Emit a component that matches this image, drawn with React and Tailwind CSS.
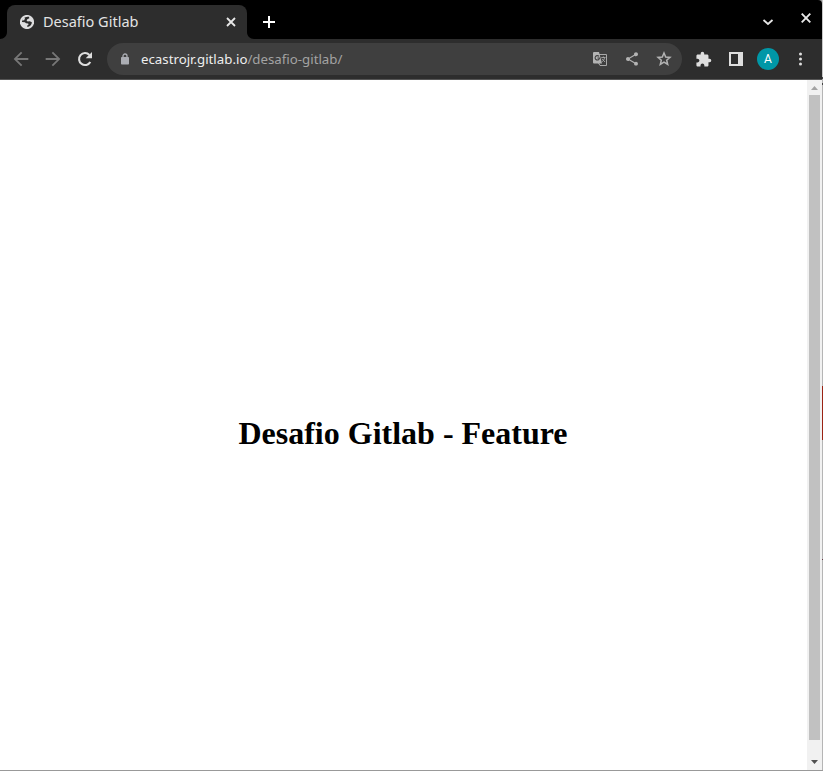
import React from "react";
import {
  MdArrowBack,
  MdArrowForward,
  MdShare,
  MdExtension,
} from "react-icons/md";

function Globe() {
  return (
    <svg className="h-[14px] w-[14px] shrink-0" viewBox="0 0 14 14">
      <circle cx="7" cy="7" r="7.100" fill="#dededf" />
      <path
        fill="#2d2d2d"
        d="M7.500 1.800H9L9.300 3.300 7.300 4.200 6.600 5.400 7.600 6.400 9.600 6.300 11.900 7.300C11.800 9.800 9.900 11.700 7.300 12V10.500L8.600 9.500 8.200 8.400 6 8.200 4.900 7.200 2 6.900C2 4.300 4.500 2 7.500 1.800Z"
      />
      <path fill="#dededf" d="M2 5.500L4.200 5.300 5 3.300 3.500 2.500Z" />
    </svg>
  );
}

function Reload() {
  return (
    <svg className="h-[22px] w-[22px] shrink-0" viewBox="0 0 22 22">
      <path d="M16.300 14A6 6 0 1 1 15.400 6.900" fill="none" stroke="#dedede" strokeWidth="2.100" />
      <path d="M18 4v6.300h-6.300Z" fill="#dedede" />
    </svg>
  );
}

function Translate() {
  return (
    <svg className="h-[16px] w-[16px] shrink-0" viewBox="0 0 16 16" fill="none">
      <path d="M7 3.500h7.500v11H8L6.500 12" stroke="#a9a9a9" strokeWidth="1" />
      <path d="M1 2a1 1 0 0 1 1-1h5l3 11.500H2a1 1 0 0 1-1-1Z" fill="#b3b3b3" />
      <path d="M7 5.400A2.200 2.200 0 1 0 7.500 7H5.400" stroke="#3f3f3f" strokeWidth="1.100" />
      <path d="M9.300 6.500H13.500M11.400 5.500v1M12.700 6.500C12.300 8.500 11.500 9.500 10.300 10.700M10 7.800L13 11" stroke="#a9a9a9" strokeWidth="0.900" />
    </svg>
  );
}

function Star() {
  return (
    <svg className="h-[16px] w-[16px] shrink-0" viewBox="0 0 16 16" fill="none" stroke="#b3b3b3" strokeWidth="1.500">
      <path d="M8 2L9.700 6 14 6.400 10.700 9.200 11.700 13.500 8 11.200 4.300 13.500 5.300 9.200 2 6.400 6.300 6Z" />
    </svg>
  );
}

function Lock() {
  return (
    <svg className="h-[12px] w-[8px] shrink-0" viewBox="0 0 8 12">
      <path d="M2 5V3a2 2 0 0 1 4 0v2" fill="none" stroke="#abadb3" strokeWidth="1.300" />
      <rect y="4" width="8" height="7.500" rx="0.800" fill="#abadb3" />
    </svg>
  );
}

function TabStrip() {
  return (
    <div className="flex h-[39px] items-end bg-black">
      <svg className="h-[7px] w-[7px] shrink-0" viewBox="0 0 7 7" fill="#2d2d2d">
        <path d="M7 0v7H0C4 7 7 4 7 0Z" />
      </svg>
      <div className="flex h-[34px] w-[240px] shrink-0 items-center rounded-t-[8px] bg-[#2d2d2d] pl-[13px]">
        <Globe />
        <span className="mb-[2px] ml-[9px] w-[170px] text-[14.5px] leading-5 whitespace-nowrap text-[#e3e3e3]">
          Desafio Gitlab
        </span>
        <svg className="ml-[13px] h-[10px] w-[10px]" viewBox="0 0 10 10" stroke="#e8e8e8" strokeWidth="1.8">
          <path d="M1 1l8 8M9 1L1 9" />
        </svg>
      </div>
      <svg className="h-[7px] w-[7px] shrink-0" viewBox="0 0 7 7" fill="#2d2d2d">
        <path d="M0 0v7h7C3 7 0 4 0 0Z" />
      </svg>
      <svg className="mb-[11px] ml-[9px] h-[12px] w-[12px]" viewBox="0 0 12 12" stroke="#fff" strokeWidth="2">
        <path d="M6 0v12M0 6h12" />
      </svg>
      <div className="grow" />
      <svg className="mr-[27px] mb-[13px] h-[8px] w-[12px]" viewBox="0 0 12 8" fill="none" stroke="#e6e6e6" strokeWidth="1.8">
        <path d="M1.500 2L6 6l4.500-4" />
      </svg>
      <svg className="mr-[11px] mb-[16px] h-[10px] w-[10px]" viewBox="0 0 10 10" stroke="#e8e8e8" strokeWidth="1.9">
        <path d="M.7.700l8.600 8.600M9.300.700L.7 9.300" />
      </svg>
    </div>
  );
}

function Toolbar() {
  return (
    <div className="flex h-[41px] items-center border-b border-[#555] bg-[#2d2d2d] text-[#dedede]">
      <MdArrowBack className="ml-[10px] size-[22px] shrink-0 text-[#777]" />
      <MdArrowForward className="ml-[10px] size-[22px] shrink-0 text-[#777]" />
      <div className="ml-[10px] flex">
        <Reload />
      </div>
      <div className="ml-[11px] flex h-8 w-[575px] shrink-0 items-center rounded-full bg-[#3f3f3f] text-[#b3b3b3]">
        <div className="ml-[14px] flex">
          <Lock />
        </div>
        <div className="ml-[12px] w-[451px] text-[13.28px] leading-5 whitespace-nowrap text-[#a3a3a3]">
          <span className="text-[#eee]">ecastrojr.gitlab.io</span>/desafio-gitlab/
        </div>
        <Translate />
        <MdShare className="ml-[16px] size-[16px] shrink-0" />
        <div className="ml-[16px] flex">
          <Star />
        </div>
      </div>
      <MdExtension className="ml-[13px] size-[17px] shrink-0" />
      <svg className="ml-[17px] h-[14px] w-[14px] shrink-0" viewBox="0 0 14 14" fill="#dedede">
        <path fillRule="evenodd" d="M0 0h14v14H0ZM2 2v10h7V2Z" />
      </svg>
      <div className="ml-[14px] flex size-[22px] shrink-0 items-center justify-center rounded-full bg-[#0097a7] font-[Roboto] text-[12px] text-white">
        A
      </div>
      <svg className="ml-[20px] h-[14px] w-[4px] shrink-0" viewBox="0 0 4 14" fill="#dedede">
        <circle cx="1.500" cy="2" r="1.500" />
        <circle cx="1.500" cy="7" r="1.500" />
        <circle cx="1.500" cy="12" r="1.500" />
      </svg>
    </div>
  );
}

function Scrollbar() {
  return (
    <div className="flex w-[15px] flex-col items-center bg-[#f1f1f1]">
      <svg className="h-[15px] w-[15px] shrink-0" viewBox="0 0 15 15" fill="#a3a3a3">
        <path d="M4 10h7L7.500 6Z" />
      </svg>
      <div className="h-[645px] w-[11px] bg-[#c1c1c1]" />
      <div className="grow" />
      <svg className="mb-[1px] h-[15px] w-[15px] shrink-0" viewBox="0 0 15 15" fill="#505050">
        <path d="M4 6h7L7.500 10Z" />
      </svg>
    </div>
  );
}

export default function App() {
  return (
    <div className="flex h-[771px] w-[823px] flex-col overflow-hidden bg-[#999] font-['Noto_Sans',sans-serif]">
      <div className="flex h-[770px]">
        <div className="flex w-[822px] flex-col overflow-hidden rounded-tr-[4px]">
          <TabStrip />
          <Toolbar />
          <div className="flex h-[690px] bg-white">
            <main className="flex w-[807px] items-center justify-center pt-[15px] pr-[1px]">
              <h1 className="font-['Liberation_Serif',serif] text-[32px] leading-9 font-bold text-black">
                Desafio Gitlab - Feature
              </h1>
            </main>
            <Scrollbar />
          </div>
        </div>
        <div className="flex w-px flex-col bg-[#b5b5b5]">
          <div className="h-[77px] bg-[#c8c8c8]" />
          <div className="h-[8px] border-y-2 border-[#444]" />
          <div className="h-[301px]" />
          <div className="h-[54px] bg-[#9b2314]" />
          <div className="h-[119px]" />
          <div className="h-px bg-[#633743]" />
        </div>
      </div>
    </div>
  );
}
